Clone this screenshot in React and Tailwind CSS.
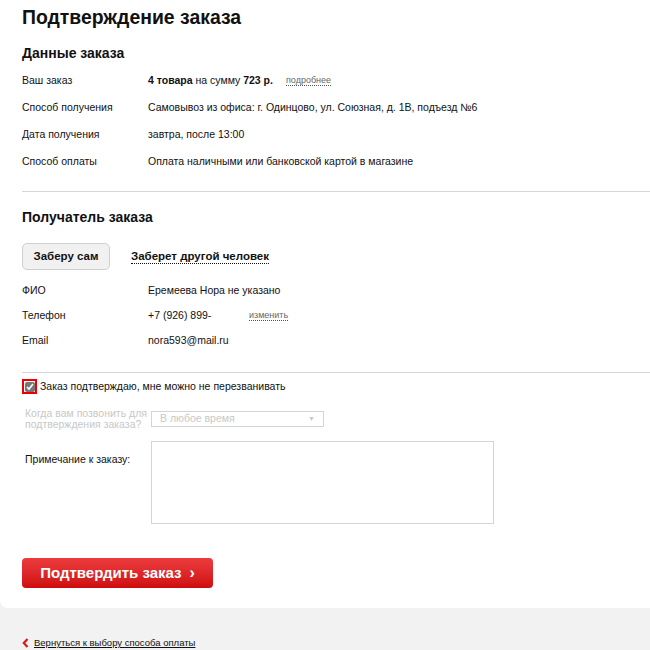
import { useState } from 'react';

const orderRows = [
  { label: 'Ваш заказ', value: 'order' },
  { label: 'Способ получения', value: 'Самовывоз из офиса: г. Одинцово, ул. Союзная, д. 1В, подъезд №6' },
  { label: 'Дата получения', value: 'завтра, после 13:00' },
  { label: 'Способ оплаты', value: 'Оплата наличными или банковской картой в магазине' },
];

function Row({ label, children, height = 'h-[27px]' }) {
  return (
    <div className={`flex items-center ${height} text-[10.5px] text-[#111]`}>
      <div className="w-[126px] shrink-0">{label}</div>
      <div className="flex items-center">{children}</div>
    </div>
  );
}

export default function App() {
  const [confirmed, setConfirmed] = useState(true);

  return (
    <div className="min-h-[650px] bg-[#f2f2f2] font-['Liberation_Sans',Arial,sans-serif] text-[#111]">
      <div className="bg-white rounded-bl-[8px] pl-[22px] pt-[5px] pb-[20px]">
        <h1 className="text-[19.4px] font-bold leading-[24px]">Подтверждение заказа</h1>

        {/* order details */}
        <h2 className="text-[14px] font-bold leading-[18px] mt-[15px] mb-[5px]">Данные заказа</h2>
        <div className="pb-[16px] border-b border-[#d6d6d6]">
          {orderRows.map(row => (
            <Row key={row.label} label={row.label}>
              {row.value === 'order' ? (
                <>
                  <span><b>4 товара</b> на сумму <b>723 р.</b></span>
                  <span className="ml-[13px] text-[9px] text-[#666] border-b border-dotted border-[#555] leading-[10px]">подробнее</span>
                </>
              ) : (
                row.value
              )}
            </Row>
          ))}
        </div>

        {/* recipient */}
        <h2 className="text-[14px] font-bold leading-[18px] mt-[16px]">Получатель заказа</h2>
        <div className="flex items-center mt-[17px] mb-[8px]">
          <button className="h-[27px] w-[88px] rounded-[5px] border border-[#d0d0d0] bg-[#f1f1f1] text-[11.5px] font-bold text-[#111]">
            Заберу сам
          </button>
          <span className="ml-[21px] text-[11.5px] font-bold border-b border-dotted border-[#111] leading-[13px]">Заберет другой человек</span>
        </div>
        <div className="pb-[19px] border-b border-[#d6d6d6]">
          <Row label="ФИО" height="h-[25px]">Еремеева Нора не указано</Row>
          <Row label="Телефон" height="h-[25px]">
            <span className="w-[101px]">+7 (926) 899-</span>
            <span className="text-[9px] text-[#666] border-b border-dotted border-[#555] leading-[10px]">изменить</span>
          </Row>
          <Row label="Email" height="h-[25px]">nora593@mail.ru</Row>
        </div>

        {/* confirmation */}
        <label className="flex items-center mt-[6px] text-[10.5px]">
          <span className="w-[15px] h-[15px] border-2 border-[#e00] flex items-center justify-center">
            <input
              type="checkbox"
              checked={confirmed}
              onChange={e => setConfirmed(e.target.checked)}
              className="w-[10px] h-[10px] m-0 accent-[#777]"
            />
          </span>
          <span className="ml-[3px]">Заказ подтверждаю, мне можно не перезванивать</span>
        </label>

        <div className="flex items-center mt-[13px] pl-[3px]">
          <div className="w-[126px] text-[10.5px] leading-[11px] text-[#c8c8c8] whitespace-nowrap">
            Когда вам позвонить для<br />подтверждения заказа?
          </div>
          <div className="w-[173px] h-[16px] border border-[#d4d4d4] flex items-center justify-between px-[8px] text-[10.5px] text-[#c8c8c8]">
            <span>В любое время</span>
            <span className="text-[7px]">▼</span>
          </div>
        </div>

        <div className="flex mt-[11px] pl-[3px]">
          <div className="w-[126px] text-[10.5px] pt-[11px]">Примечание к заказу:</div>
          <textarea className="w-[343px] h-[83px] border border-[#d4d4d4] resize-none outline-none" />
        </div>

        <button className="mt-[34px] h-[30px] w-[191px] rounded-[4px] bg-gradient-to-b from-[#ec3b3e] to-[#cf0a0d] text-white text-[15px] font-bold flex items-center justify-center gap-[8px]">
          <span>Подтвердить заказ</span>
          <span className="text-[16px] leading-none">›</span>
        </button>
      </div>

      {/* back link */}
      <div className="flex items-center pl-[22px] mt-[28px] text-[9.5px]">
        <svg width="7" height="10" viewBox="0 0 7 10" className="mr-[5px]">
          <path d="M5.5 1 L1.8 5 L5.5 9" fill="none" stroke="#d71a1d" strokeWidth="2.2" />
        </svg>
        <span className="underline">Вернуться к выбору способа оплаты</span>
      </div>
    </div>
  );
}
